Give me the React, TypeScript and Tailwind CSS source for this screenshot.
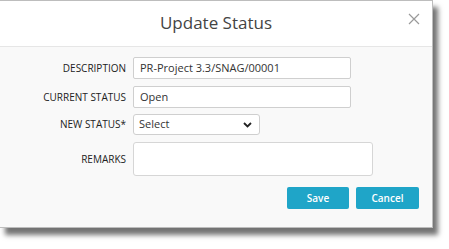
import React from "react";

export default function App() {
  return (
    <div className="w-[449px] h-[249px] bg-white overflow-hidden" style={{ fontFamily: '"Open Sans", "Noto Sans", sans-serif' }}>
      <div className="w-[433px] h-[228px] flex flex-col border-t border-r border-b border-[#bdbdbd] bg-[#f9f9f9] shadow-[5px_7px_5px_rgba(0,0,0,0.55)]">
        <div className="h-[46px] bg-white border-b border-[#e6e6e6] flex items-center justify-center relative shrink-0">
          <span className="text-[17px] text-[#444] leading-none mt-[-2px]">Update Status</span>
          <svg className="absolute left-[408px] top-[12px]" width="12" height="12" viewBox="0 0 12 12">
            <path d="M1 1L11 11M11 1L1 11" stroke="#9a9a9a" strokeWidth="1.2" />
          </svg>
        </div>
        <div className="flex-1 flex flex-col pt-[10px]">
          <div className="flex items-center h-[22px]">
            <div className="w-[126px] text-right text-[10px] font-medium text-[#222]">DESCRIPTION</div>
            <div className="ml-[7px] w-[218px] h-[22px] bg-white border border-[#cfcfcf] rounded-[2px] flex items-center px-[6px] text-[11px] text-[#333]">PR-Project 3.3/SNAG/00001</div>
          </div>
          <div className="flex items-center h-[22px] mt-[7px]">
            <div className="w-[126px] text-right text-[10px] font-medium text-[#222]">CURRENT STATUS</div>
            <div className="ml-[7px] w-[218px] h-[22px] bg-white border border-[#cfcfcf] rounded-[2px] flex items-center px-[6px] text-[11px] text-[#333]">Open</div>
          </div>
          <div className="flex items-center h-[21px] mt-[6px]">
            <div className="w-[126px] text-right text-[10px] font-medium text-[#222]">NEW STATUS*</div>
            <div className="ml-[7px] w-[127px] h-[21px] bg-white border border-[#cfcfcf] rounded-[3px] flex items-center justify-between pl-[5px] pr-[7px] text-[11px] text-[#333]">
              <span>Select</span>
              <svg width="9" height="6" viewBox="0 0 9 6">
                <path d="M1 1L4.5 4.5L8 1" stroke="#222" strokeWidth="1.8" fill="none" />
              </svg>
            </div>
          </div>
          <div className="flex items-center h-[34px] mt-[7px]">
            <div className="w-[126px] text-right text-[10px] font-medium text-[#222]">REMARKS</div>
            <div className="ml-[7px] w-[240px] h-[34px] bg-white border border-[#d6d6d6] rounded-[3px]"></div>
          </div>
          <div className="flex justify-end gap-[7px] mt-[11px] pr-[13px]">
            <button className="w-[62px] h-[22px] bg-[#1fa5c8] rounded-[2px] text-white text-[10px] font-semibold">Save</button>
            <button className="w-[63px] h-[22px] bg-[#1fa5c8] rounded-[2px] text-white text-[10px] font-semibold">Cancel</button>
          </div>
        </div>
      </div>
    </div>
  );
}
